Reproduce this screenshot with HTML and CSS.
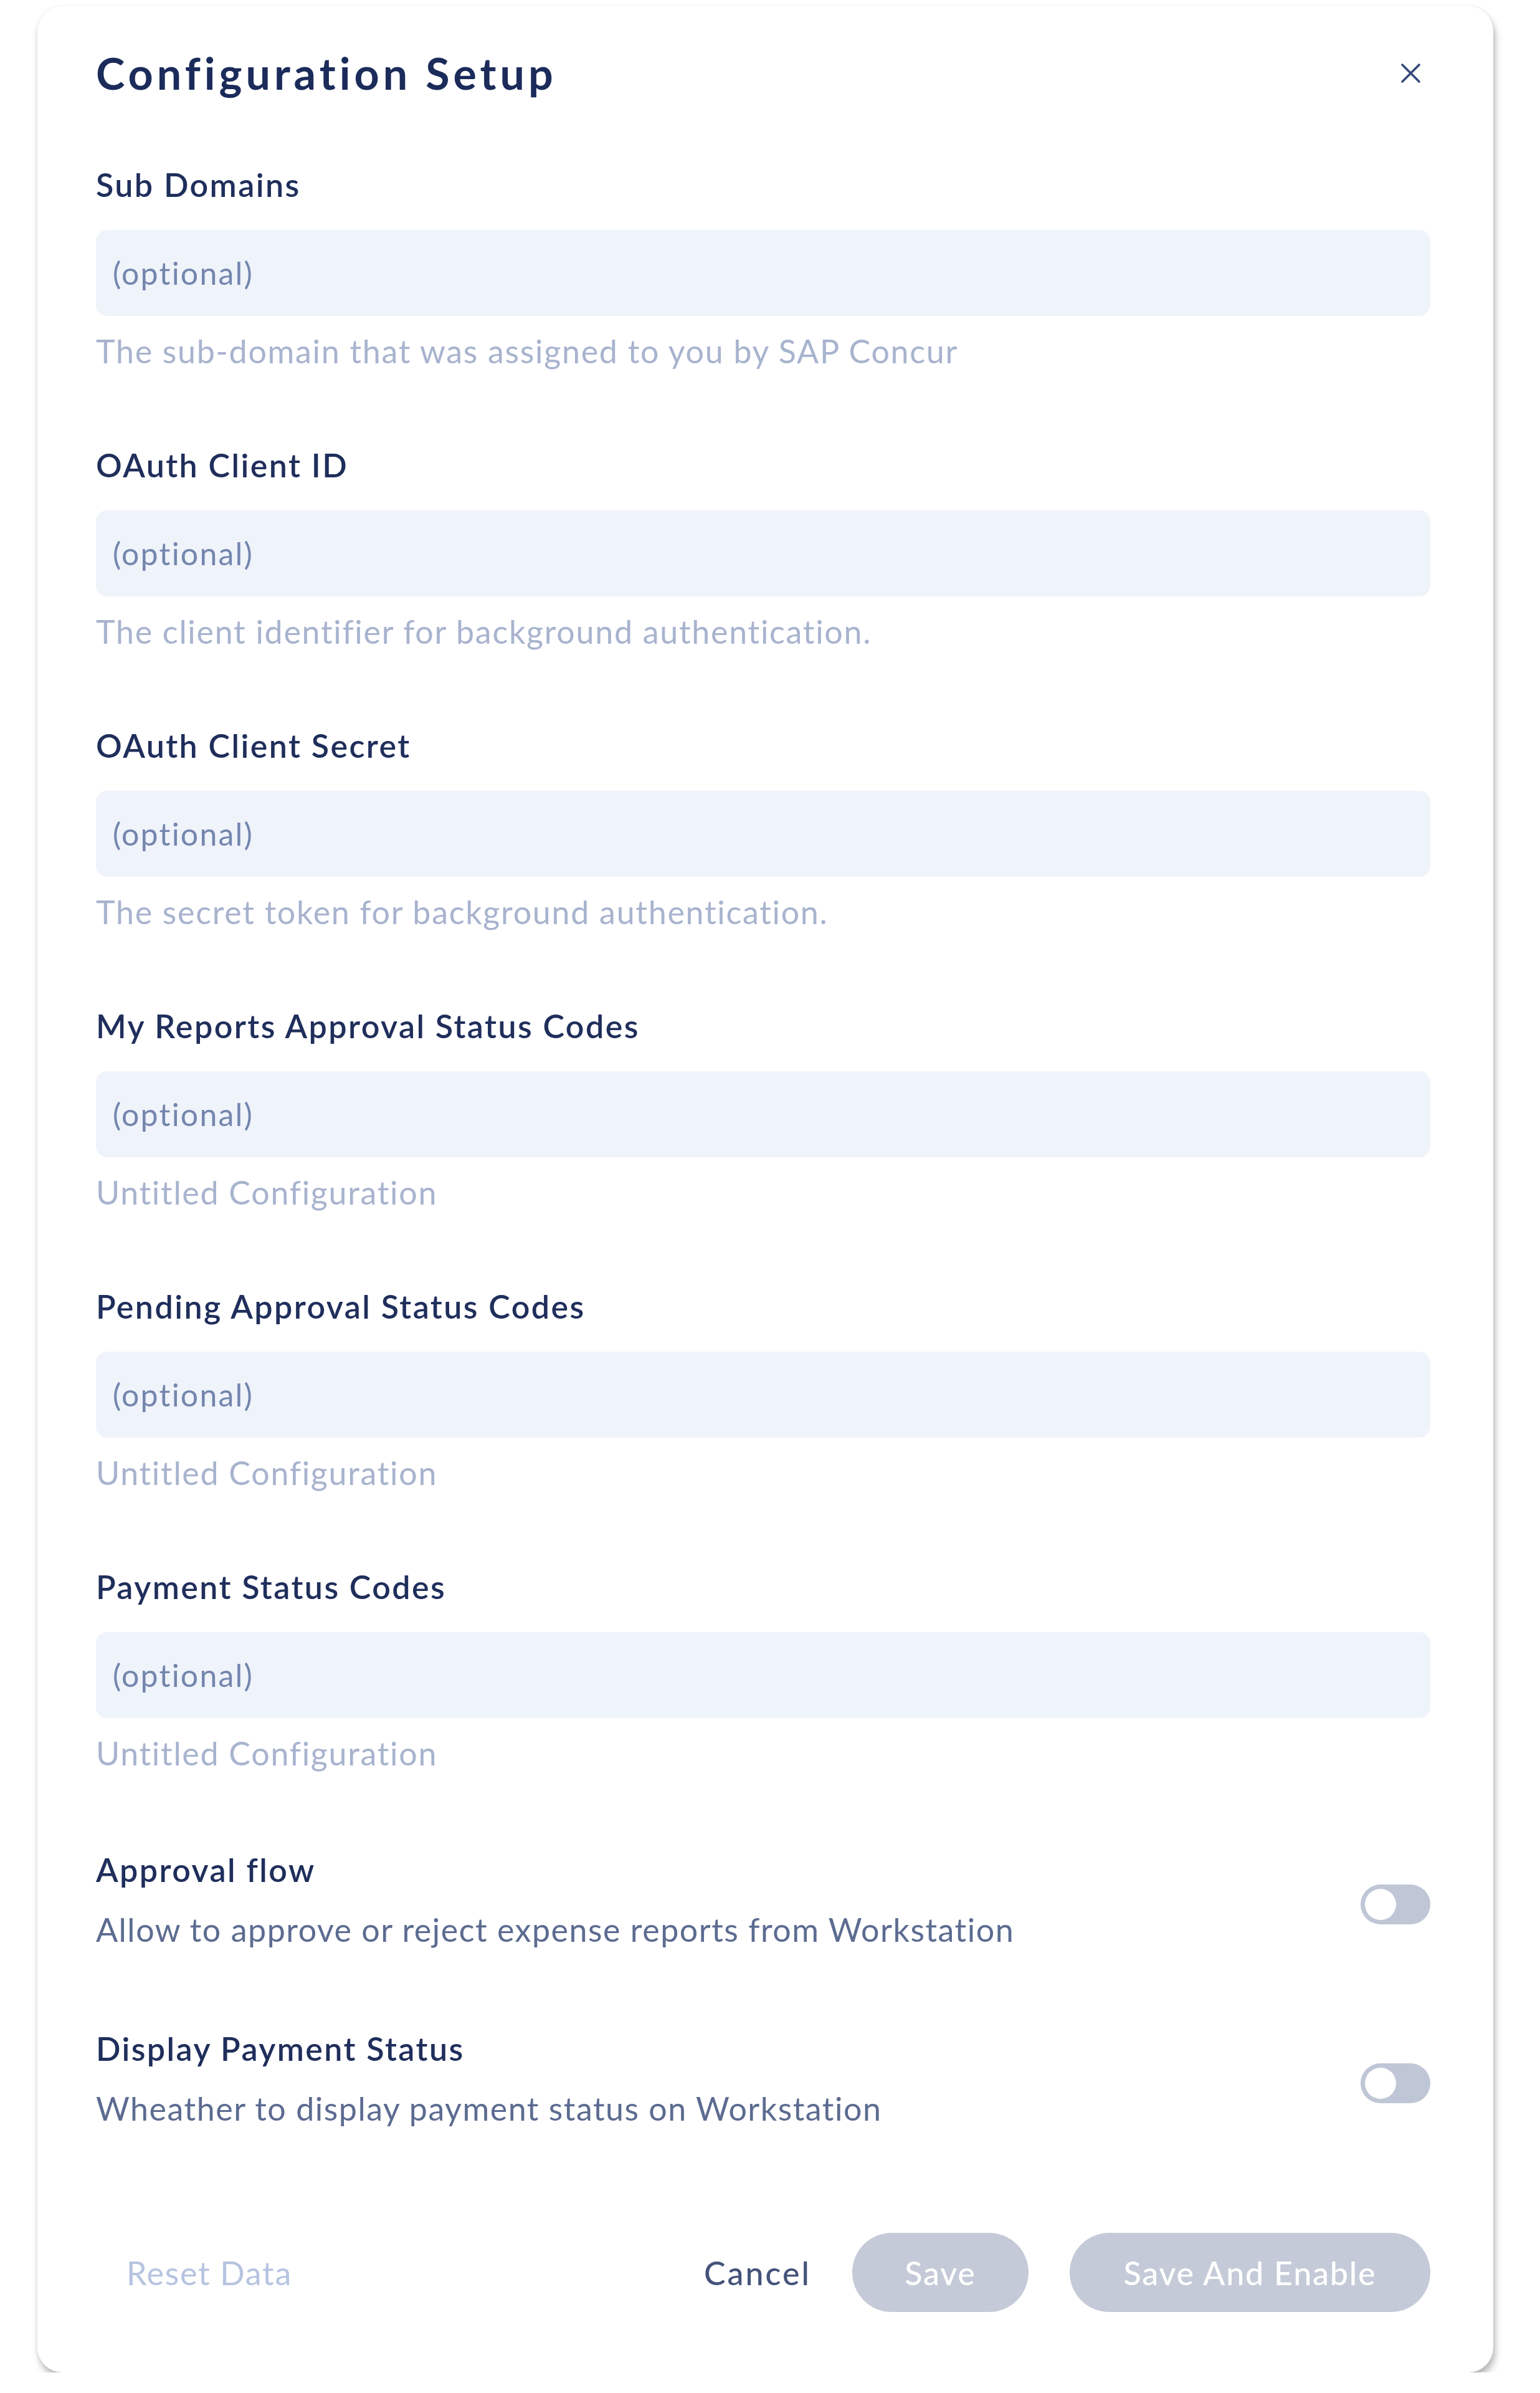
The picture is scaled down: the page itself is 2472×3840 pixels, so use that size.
FILE: index.html
```html
<!DOCTYPE html>
<html lang="en">
<head>
<meta charset="utf-8">
<title>Configuration Setup</title>
<link rel="stylesheet" href="styles.css">
</head>
<body>
<div class="card">
  <div class="header">
    <h1 class="title">Configuration Setup</h1>
    <button class="close" aria-label="Close">
      <svg width="33" height="33" viewBox="0 0 33 33"><path d="M3 3 L30 30 M30 3 L3 30" stroke="#34487a" stroke-width="3.6" stroke-linecap="round" fill="none"/></svg>
    </button>
  </div>

  <div class="fields">
    <div class="field">
      <label class="label">Sub Domains</label>
      <input class="input" placeholder="(optional)">
      <p class="help">The sub-domain that was assigned to you by SAP Concur</p>
    </div>
    <div class="field">
      <label class="label">OAuth Client ID</label>
      <input class="input" placeholder="(optional)">
      <p class="help">The client identifier for background authentication.</p>
    </div>
    <div class="field">
      <label class="label">OAuth Client Secret</label>
      <input class="input" placeholder="(optional)">
      <p class="help">The secret token for background authentication.</p>
    </div>
    <div class="field">
      <label class="label">My Reports Approval Status Codes</label>
      <input class="input" placeholder="(optional)">
      <p class="help">Untitled Configuration</p>
    </div>
    <div class="field">
      <label class="label">Pending Approval Status Codes</label>
      <input class="input" placeholder="(optional)">
      <p class="help">Untitled Configuration</p>
    </div>
    <div class="field">
      <label class="label">Payment Status Codes</label>
      <input class="input" placeholder="(optional)">
      <p class="help">Untitled Configuration</p>
    </div>
  </div>

  <div class="switches">
    <div class="switch-row">
      <div class="switch-text">
        <div class="label">Approval flow</div>
        <p class="desc">Allow to approve or reject expense reports from Workstation</p>
      </div>
      <span class="toggle"></span>
    </div>
    <div class="switch-row">
      <div class="switch-text">
        <div class="label">Display Payment Status</div>
        <p class="desc">Wheather to display payment status on Workstation</p>
      </div>
      <span class="toggle"></span>
    </div>
  </div>

  <div class="footer">
    <button class="reset">Reset Data</button>
    <div class="actions">
      <button class="cancel">Cancel</button>
      <button class="pill pill-save">Save</button>
      <button class="pill pill-enable">Save And Enable</button>
    </div>
  </div>
</div>
</body>
</html>
```

FILE: styles.css
```css
html, body {
  margin: 0;
  padding: 0;
  background: #ffffff;
}

body {
  font-family: "Lato", "Liberation Sans", sans-serif;
  font-variant-ligatures: none;
  color: #1f2e5b;
}

.card {
  box-sizing: border-box;
  width: 2337px;
  margin: 10px 0 0 60px;
  padding: 67px 101px 97px 94px;
  background: #ffffff;
  border-radius: 40px;
  box-shadow: 3px 9px 12px rgba(0, 0, 0, 0.28), 0 0 6px rgba(0, 0, 0, 0.06);
}

.header {
  display: flex;
  align-items: center;
  justify-content: space-between;
  height: 80px;
}

.title {
  margin: 0;
  font-family: "Lato", sans-serif;
  font-weight: 700;
  font-size: 70px;
  line-height: 80px;
  letter-spacing: 6px;
  color: #1b2b5a;
}

.close {
  width: 64px;
  height: 64px;
  padding: 0;
  border: 0;
  background: transparent;
  display: flex;
  align-items: center;
  justify-content: center;
}

.fields {
  margin-top: 109px;
  display: flex;
  flex-direction: column;
  gap: 123px;
}

.field {
  display: flex;
  flex-direction: column;
}

.label {
  display: block;
  font-size: 52px;
  line-height: 60px;
  font-weight: 600;
  color: #1f2e5b;
  letter-spacing: 2.4px;
}

.input {
  box-sizing: border-box;
  margin-top: 43px;
  width: 100%;
  height: 138px;
  padding: 0 27px;
  border: 0;
  border-radius: 18px;
  background: #eff3fa;
  font-family: "Lato", sans-serif;
  font-variant-ligatures: none;
  font-size: 50px;
  letter-spacing: 2.2px;
  color: #1f2e5b;
  outline: none;
}

.input::placeholder {
  color: #7486ae;
  opacity: 1;
}

.help {
  margin: 26px 0 0;
  font-size: 52px;
  line-height: 60px;
  color: #a8b3ce;
  letter-spacing: 1.7px;
}

.switches {
  margin-top: 127px;
  display: flex;
  flex-direction: column;
  gap: 131px;
}

.switch-row {
  display: flex;
  justify-content: space-between;
  align-items: flex-start;
}

.desc {
  margin: 36px 0 0;
  font-size: 52px;
  line-height: 60px;
  color: #5c6b90;
  letter-spacing: 1.5px;
}

.toggle {
  position: relative;
  margin-top: 54px;
  width: 112px;
  height: 64px;
  border-radius: 32px;
  background: #bfc6d6;
  flex: none;
}

.toggle::after {
  content: "";
  position: absolute;
  left: 7px;
  top: 7px;
  width: 50px;
  height: 50px;
  border-radius: 50%;
  background: #ffffff;
}

.footer {
  margin-top: 170px;
  display: flex;
  align-items: center;
  justify-content: space-between;
  height: 127px;
}

button {
  font-family: "Lato", sans-serif;
  font-variant-ligatures: none;
  cursor: pointer;
}

.reset {
  border: 0;
  background: transparent;
  padding: 0 0 0 49px;
  font-size: 52px;
  color: #b6c4e0;
  letter-spacing: 1.7px;
}

.actions {
  display: flex;
  align-items: center;
  gap: 66px;
}

.cancel {
  border: 0;
  background: transparent;
  padding: 0;
  font-size: 52px;
  font-weight: 500;
  color: #44537a;
  letter-spacing: 3px;
}

.pill {
  height: 127px;
  padding: 0;
  border: 0;
  border-radius: 64px;
  background: #c5cad8;
  color: #ffffff;
  font-size: 52px;
  font-weight: 500;
  letter-spacing: 1.8px;
  text-align: center;
}

.pill-save {
  width: 283px;
}

.pill-enable {
  width: 579px;
}
```
